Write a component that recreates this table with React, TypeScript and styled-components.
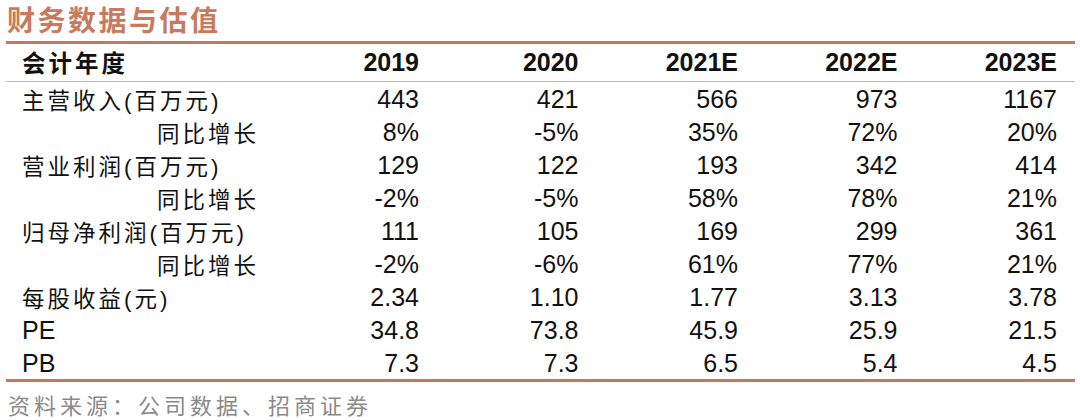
import * as React from "react"
import styled, { createGlobalStyle } from "styled-components"

const GlobalStyle = createGlobalStyle`
  body {
    margin: 0;
    background: #ffffff;
  }
`

const Page = styled.div`
  width: 1080px;
  height: 420px;
  padding: 0 5px 0 6px;
  box-sizing: border-box;
  overflow: hidden;
  font-family: "Liberation Sans", Arial, sans-serif;
  color: #111;
`

const Title = styled.h2`
  margin: 0;
  padding: 3px 0 0 1px;
  height: 41px;
  box-sizing: border-box;
  font-family: "Noto Sans CJK SC", sans-serif;
  font-weight: 700;
  font-size: 28px;
  line-height: 32px;
  letter-spacing: 2.5px;
  color: #c77a5d;
`

const Table = styled.div`
  display: grid;
  grid-template-columns: 253.5px repeat(5, 1fr);
  padding-right: 18px;
  border-top: 3px solid #c27a5e;
  border-bottom: 3px solid #c27a5e;
`

const Cell = styled.div<{ $head?: boolean }>`
  display: flex;
  align-items: center;
  justify-content: flex-end;
  height: ${(p) => (p.$head ? "37.5px" : "33px")};
  padding-top: ${(p) => (p.$head ? "0" : "2px")};
  box-sizing: border-box;
  font-size: 25px;
  font-weight: ${(p) => (p.$head ? 700 : 400)};
  border-bottom: ${(p) => (p.$head ? "1.5px solid #dcae9c" : "none")};
  white-space: nowrap;
`

const Label = styled(Cell)<{ $indent?: boolean; $latin?: boolean }>`
  justify-content: flex-start;
  padding-left: ${(p) => (p.$indent ? "151px" : "16px")};
  font-family: "Liberation Sans", "Noto Sans CJK SC", sans-serif;
  font-size: ${(p) => (p.$latin ? "25px" : p.$head ? "23.5px" : "22.5px")};
  letter-spacing: ${(p) => (p.$latin ? "0" : "3px")};
`

const HeadCell = styled(Cell)`
  margin-right: -18px;
  padding-right: 18px;
`

const Source = styled.div`
  padding: 6px 0 0 2px;
  font-family: "Noto Sans CJK SC", sans-serif;
  font-size: 22px;
  letter-spacing: 4px;
  color: #8a8a8a;
`

const years = ["2019", "2020", "2021E", "2022E", "2023E"]

const rows: { label: string; indent?: boolean; latin?: boolean; values: string[] }[] = [
  { label: "主营收入(百万元)", values: ["443", "421", "566", "973", "1167"] },
  { label: "同比增长", indent: true, values: ["8%", "-5%", "35%", "72%", "20%"] },
  { label: "营业利润(百万元)", values: ["129", "122", "193", "342", "414"] },
  { label: "同比增长", indent: true, values: ["-2%", "-5%", "58%", "78%", "21%"] },
  { label: "归母净利润(百万元)", values: ["111", "105", "169", "299", "361"] },
  { label: "同比增长", indent: true, values: ["-2%", "-6%", "61%", "77%", "21%"] },
  { label: "每股收益(元)", values: ["2.34", "1.10", "1.77", "3.13", "3.78"] },
  { label: "PE", latin: true, values: ["34.8", "73.8", "45.9", "25.9", "21.5"] },
  { label: "PB", latin: true, values: ["7.3", "7.3", "6.5", "5.4", "4.5"] },
]

export default function App() {
  return (
    <Page>
      <GlobalStyle />
      <Title>财务数据与估值</Title>
      <Table>
        <Label $head>会计年度</Label>
        {years.map((y, i) =>
          i === years.length - 1 ? (
            <HeadCell key={y} $head>
              {y}
            </HeadCell>
          ) : (
            <Cell key={y} $head>
              {y}
            </Cell>
          )
        )}
        {rows.map((r, ri) => (
          <React.Fragment key={ri}>
            <Label $indent={r.indent} $latin={r.latin}>
              {r.label}
            </Label>
            {r.values.map((v, vi) => (
              <Cell key={vi}>{v}</Cell>
            ))}
          </React.Fragment>
        ))}
      </Table>
      <Source>资料来源：公司数据、招商证券</Source>
    </Page>
  )
}
